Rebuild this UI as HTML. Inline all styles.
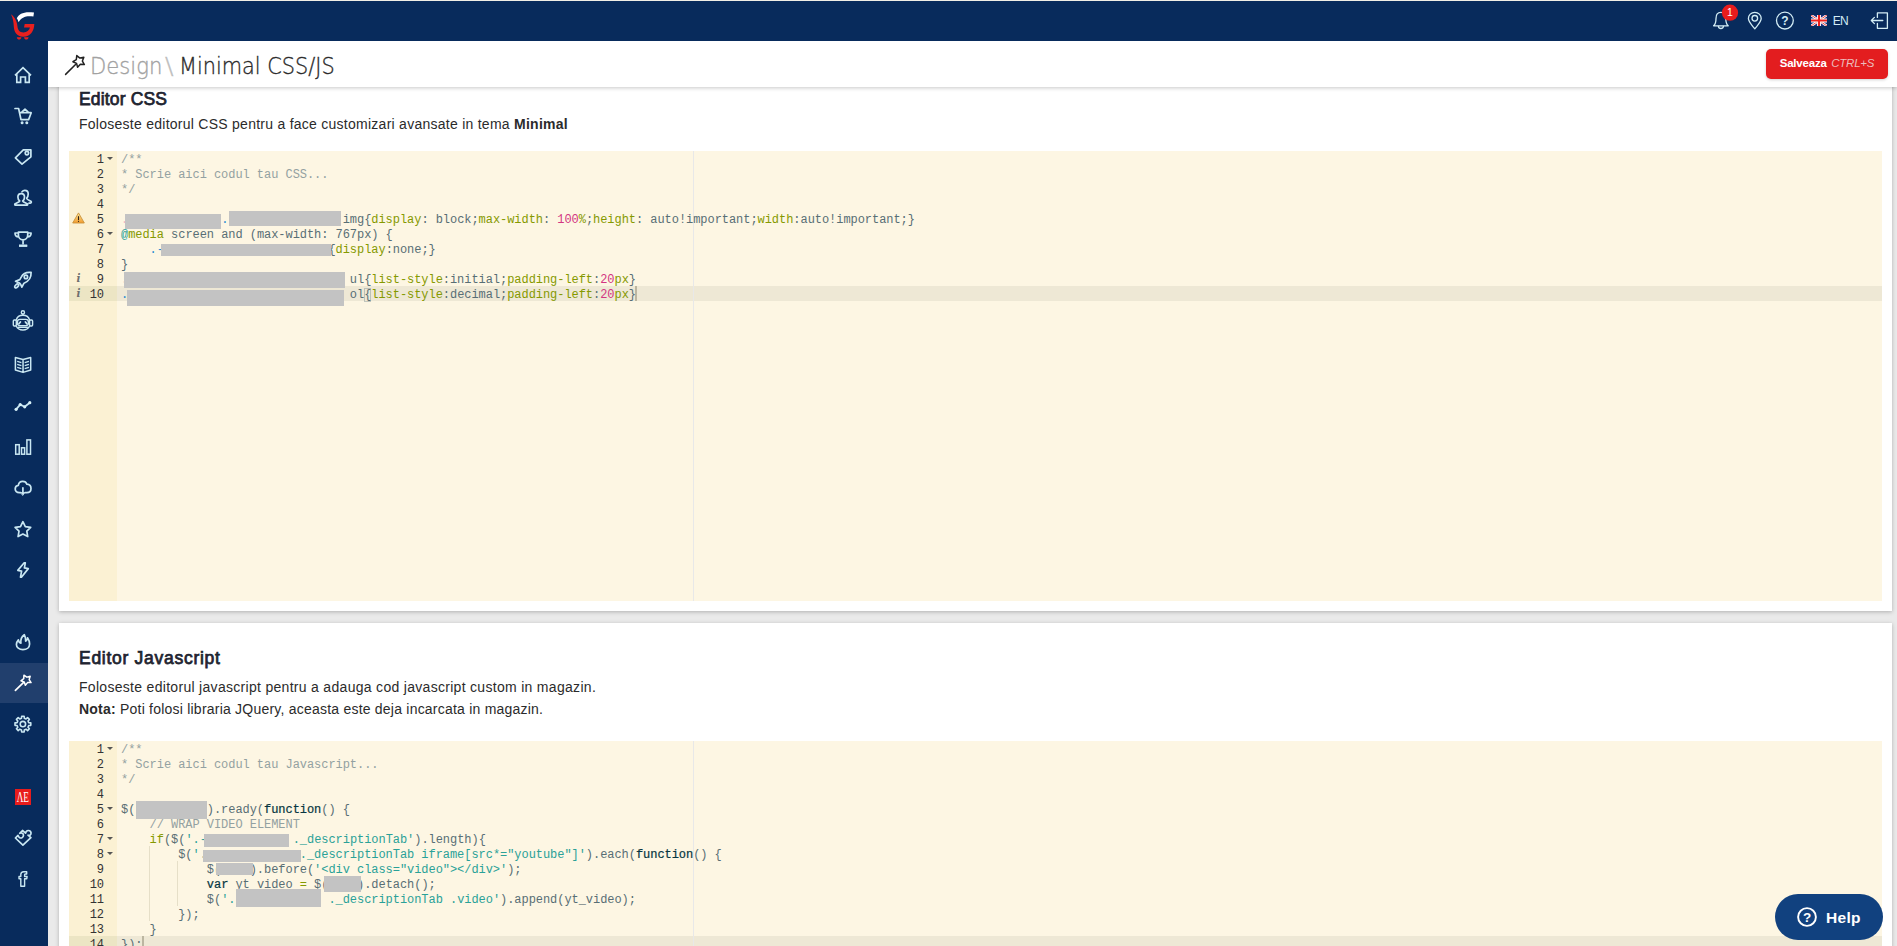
<!DOCTYPE html>
<html lang="ro">
<head>
<meta charset="utf-8">
<title>Design \ Minimal CSS/JS</title>
<style>
*{box-sizing:border-box}
html,body{margin:0;padding:0}
body{width:1897px;height:946px;overflow:hidden;position:relative;background:#eaeaea;font-family:"Liberation Sans",sans-serif;color:#333}
.abs{position:absolute}
#topline{left:0;top:0;width:1897px;height:1px;background:#f1efe6;z-index:30}
#topbar{left:0;top:0;width:1897px;height:41px;background:#082b5c;z-index:20}
#side{left:0;top:0;width:48px;height:946px;background:#082b5c;z-index:21}
#side .act{position:absolute;left:0;top:663px;width:48px;height:40px;background:#213f6d}
#head{left:48px;top:41px;width:1849px;height:46px;background:#fff;box-shadow:0 1px 4px rgba(0,0,0,.22);z-index:10}
#title{left:43.5px;top:12px;font-family:"DejaVu Sans","Liberation Sans",sans-serif;font-weight:200;font-size:23px;letter-spacing:0;line-height:27px;white-space:nowrap;color:#2b2b2b}
#title span{transform-origin:0 50%;-webkit-text-stroke:.35px currentColor}
#title .g{color:#a2a2a2}
#title .sl{color:#bdbdbd}
#save{left:1718px;top:8px;width:122px;height:30px;border-radius:5px;background:#e31d1f;color:#fff;font-size:11.5px;letter-spacing:-0.21px;line-height:29px;text-align:center;white-space:nowrap;box-shadow:0 1px 3px rgba(0,0,0,.18)}
#save b{font-weight:bold;margin-right:1.5px}
#save i{color:#ecbcbd}
.card{left:59px;width:1833px;background:#fff;box-shadow:0 1px 4px rgba(0,0,0,.25)}
#card1{top:70px;height:541px}
#card2{top:623px;height:340px}
h2{position:absolute;margin:0;left:79px;font-size:17.5px;font-weight:normal;-webkit-text-stroke:.75px #1e2430;line-height:20px;color:#1e2430;white-space:nowrap;z-index:3}
p.t{position:absolute;margin:0;left:79px;font-size:14px;line-height:16px;color:#2b2b2b;white-space:nowrap;z-index:3}
.ed{left:69px;width:1813px;background:#fdf6e3;overflow:hidden;font-family:"Liberation Mono",monospace;font-size:12px;line-height:15px;color:#586e75;z-index:3}
.gut{position:absolute;left:0;top:0;width:48px;height:100%;background:#fbf1d3;color:#333}
.gl{position:relative;height:15px;padding-right:13px;text-align:right;letter-spacing:-0.05px;padding-top:2px;line-height:15px}
.gl.ga{background:#ece5c4}
.fold{position:absolute;right:4px;top:6px;width:0;height:0;border-left:3px solid transparent;border-right:3px solid transparent;border-top:3.5px solid #555}
.warn{position:absolute;left:3px;top:0.5px}
.info{position:absolute;left:7.5px;top:0;font-family:"DejaVu Serif","Liberation Serif",serif;font-style:italic;font-weight:bold;font-size:10.5px;color:#6e6e6e;letter-spacing:0}
.code{position:absolute;left:48px;top:0;right:0;height:100%}
.ln{position:relative;z-index:2;height:15px;padding-left:4px;white-space:pre;letter-spacing:-0.05px;padding-top:2px;line-height:15px}
.aline{position:absolute;left:0;right:0;height:15px;background:#eee8d5}
.pm{position:absolute;left:576px;top:0;width:1px;height:100%;background:#e8e8e8}
.cur{z-index:3;position:absolute;width:2px;height:15px;background:rgba(60,55,30,.28)}
.ig{position:absolute;width:1px;background:#e6dfc8}
.c{color:#93a1a1}.k{color:#859900}.n{color:#d33682}.v{color:#268bd2}.s{color:#2aa198}.p{color:#f3b6c4}
.st{color:#073642;-webkit-text-stroke:.22px #073642}
.br{outline:1px solid rgba(147,161,161,.55);outline-offset:-1px}
.rb{position:absolute;background:#c3c3c3;z-index:5}
#help{left:1775px;top:894px;width:108px;height:46px;border-radius:23px;background:#11417f;z-index:40;color:#fff}
#help span{position:absolute;left:51px;top:14px;font-weight:bold;font-size:15.5px;letter-spacing:.3px;line-height:20px}
.ic{position:absolute;fill:none;stroke:#cbe8f3;stroke-width:1.6;stroke-linecap:round;stroke-linejoin:round;overflow:visible}
.tic{position:absolute;fill:none;stroke:#d8eef6;stroke-width:1.5;stroke-linecap:round;stroke-linejoin:round;overflow:visible}
</style>
</head>
<body>
<div id="topbar" class="abs"></div>
<div id="topline" class="abs"></div>
<div id="side" class="abs"><div class="act"></div></div>
<svg class="abs" style="left:0;top:0;z-index:25;pointer-events:none" width="1897" height="946" viewBox="0 0 1897 946">
<g>
<path d="M11 14.2 C15.5 17.5 17 22 17.4 26 C17.8 30 19.5 32.3 23.5 32.4 C27 32.4 29.2 30.4 30 27.5 L24 27.5 L24.7 24 L34.3 24 C34.2 31 30.5 36.7 23.3 36.7 C16.5 36.7 14 31.5 13.8 26.5 C13.6 22 13 18 11 14.2 Z" fill="#e8201f"/>
<path d="M16.8 18.2 C19 13.8 24 11.3 34 12.6 L33.4 16.6 C26.5 15.6 21.5 17 18.6 22.2 C18.2 20.6 17.6 19.4 16.8 18.2 Z" fill="#ffffff"/>
<path d="M16.8 37.2 H21.4 C21.2 38.8 20.2 39.5 19.1 39.5 C18 39.5 17 38.8 16.8 37.2 Z M24 37.2 H28.6 C28.4 38.8 27.4 39.5 26.3 39.5 C25.2 39.5 24.2 38.8 24 37.2 Z" fill="#e8201f"/>
</g>
<g fill="none" stroke="#c9e7f2" stroke-width="1.7" stroke-linecap="round" stroke-linejoin="round">
<path d="M15 75.3 L23 67.6 L31 75.3 M16.8 74.2 V82.4 H20.6 V77 H25.4 V82.4 H29.2 V74.2" stroke-linecap="butt" stroke-linejoin="miter"/>
<path d="M15 108.5 H18.6 L21 119.6 H28.6 L31.2 112.7 H19.6 M22 111.9 L25 109.2 L28 111.9"/>
<circle cx="22.1" cy="122.7" r="1.5" fill="#c9e7f2" stroke="none"/><circle cx="26.8" cy="122.7" r="1.5" fill="#c9e7f2" stroke="none"/>
<path d="M15.4 157.9 L23.3 149.9 H30.9 V156.8 L22 164.2 Z"/><circle cx="26.9" cy="153.1" r="1.7"/>
<path d="M21.2 193.6 C23.4 193.6 24.5 195.2 24.5 197 C24.5 198.8 23.8 200.2 22.7 201 C22.9 202 24.3 202.4 27.3 203.8 C27.8 204.1 27.8 205.2 27 205.2 H15.4 C14.6 205.2 14.6 204.1 15.1 203.8 C18.1 202.4 19.5 202 19.7 201 C18.6 200.2 17.9 198.8 17.9 197 C17.9 195.2 19 193.6 21.2 193.6 Z"/>
<path d="M22 191.8 C22.8 190.8 23.8 190.4 24.8 190.4 C27 190.4 28.2 192 28.2 194 C28.2 196 27.6 197.4 26.6 198.4 C26.9 199.6 29 200.2 30.9 201.2 C31.7 201.8 31.4 203.2 30.4 203.2 H29"/>
<path d="M18.4 232.1 H27.7 V235.3 C27.7 237.8 25.8 239.8 23.05 239.8 C20.3 239.8 18.4 237.8 18.4 235.3 Z M23.05 239.8 V244.6 M19 245.8 H27.2 M18.4 233 H15 C15 235.5 16.2 236.9 18.7 236.9 M27.7 233 H31.1 C31.1 235.5 29.9 236.9 27.4 236.9" stroke-linecap="butt"/>
<path d="M19 245.6 H27.2" stroke-width="2.2" stroke-linecap="butt"/>
<path d="M31.1 272.4 C27 272 23.2 273 21.5 276.6 L19.8 279.6 L15.5 281.3 L19.4 283 C20.5 284 21.5 285.5 21.9 287.2 L24 283.2 C28 281.6 31.4 278.6 31.1 272.4 Z"/><circle cx="25.9" cy="276.9" r="1.7"/>
<ellipse cx="16.7" cy="285.9" rx="2.3" ry="1.3" transform="rotate(-45 16.7 285.9)"/>
<g stroke-width="1.4"><circle cx="22.9" cy="312.4" r="1.6"/><path d="M22.9 314 V315.2"/><path d="M16.2 320 C17 317 19.6 315.2 22.9 315.2 C26.2 315.2 28.8 317 29.6 320 M16.2 326 C17.4 328.6 19.6 330 22.9 330 C26.2 330 28.4 328.6 29.6 326"/><rect x="13.3" y="320" width="3" height="6" rx="1"/><rect x="29.6" y="320" width="3" height="6" rx="1"/><rect x="17.4" y="319.4" width="11" height="6.2" rx="2.6"/><path d="M18.4 327.3 H27.4" /><path d="M19 323.6 L20.4 322 M26.8 323.6 L25.4 322" stroke-width="1.8"/></g>
<g stroke-width="1.5" stroke-linecap="butt"><path d="M15.4 357.6 L23.05 359.6 L30.7 357.6 V370 L23.05 372.4 L15.4 370 Z M23.05 359.6 V372.4"/><path d="M17.2 361.4 L21.4 362.6 M17.2 364.4 L21.4 365.6 M17.2 367.4 L21.4 368.6 M28.9 361.4 L24.7 362.6 M28.9 364.4 L24.7 365.6 M28.9 367.4 L24.7 368.6" stroke-width="1.3"/></g>
<path d="M16.1 409.3 L20.2 404.6 L24.7 406.8 L29.8 402.7" stroke-width="1.8"/>
<circle cx="16.1" cy="409.3" r="1.6" fill="#d6f0f8" stroke="none"/>
<circle cx="20.2" cy="404.6" r="1.6" fill="#d6f0f8" stroke="none"/>
<circle cx="24.7" cy="406.8" r="1.6" fill="#d6f0f8" stroke="none"/>
<circle cx="29.8" cy="402.7" r="1.6" fill="#d6f0f8" stroke="none"/>
<g stroke-width="1.5" stroke-linejoin="miter"><rect x="15.7" y="444.7" width="3.5" height="9.5"/><rect x="21.5" y="447.8" width="3.1" height="6.4"/><rect x="26.9" y="439.9" width="3.6" height="14.3"/></g>
<path d="M20.6 492.6 H19.2 C16.8 492.6 15.2 491 15.2 488.9 C15.2 486.9 16.6 485.5 18.4 485.3 C18.6 482.9 20.4 481.3 22.8 481.3 C24.8 481.3 26.3 482.4 26.9 484.2 C29.4 484.4 31 486.2 31 488.5 C31 490.8 29.3 492.6 26.8 492.6 H25.2 M22.9 487.8 V493"/>
<path d="M20.9 492.6 H24.9 L22.9 495.2 Z" fill="#c9e7f2" stroke-width="0.8"/>
<path d="M22.90 521.70 L25.31 526.58 L30.70 527.37 L26.80 531.17 L27.72 536.53 L22.90 534.00 L18.08 536.53 L19.00 531.17 L15.10 527.37 L20.49 526.58 Z"/>
<path d="M24.2 562.8 L17.8 570.4 L21.6 571.2 L20.5 577.2 L21.4 577.2 L28.3 568.6 L24.4 567.8 L25.3 562.8 Z"/>
<path d="M24.3 634.7 C21.6 636.6 20.4 639.6 20.9 643.2 C19.4 642.6 18.6 641.4 18.4 639.8 C16.8 641.6 16.4 643.2 16.4 644.4 C16.4 647.4 19.2 649.7 22.9 649.7 C26.8 649.7 29.6 647.4 29.6 644 C29.6 641.6 28.6 639.4 27.5 637.8 C27.4 639.6 26.8 640.6 25.7 641.2 C25.6 638.6 25.2 636.4 24.3 634.7 Z"/>
<path d="M21.50 718.27 L21.65 716.20 L24.15 716.20 L24.30 718.27 L26.03 718.98 L27.60 717.63 L29.37 719.40 L28.02 720.97 L28.73 722.70 L30.80 722.85 L30.80 725.35 L28.73 725.50 L28.02 727.23 L29.37 728.80 L27.60 730.57 L26.03 729.22 L24.30 729.93 L24.15 732.00 L21.65 732.00 L21.50 729.93 L19.77 729.22 L18.20 730.57 L16.43 728.80 L17.78 727.23 L17.07 725.50 L15.00 725.35 L15.00 722.85 L17.07 722.70 L17.78 720.97 L16.43 719.40 L18.20 717.63 L19.77 718.98 Z" stroke-width="1.6"/><circle cx="22.9" cy="724.1" r="2.7" stroke-width="1.6"/>
<path d="M15.4 838 L18 835.4 C18.6 837.6 20.6 838.6 22.2 837.6 C23.8 836.6 23.9 834.4 22.4 833.2 C21.4 832.6 20.4 832.7 19.7 833.3 L22.5 830.5 L25.6 833.2 C26 830.8 28 830 29.6 830.8 C31.2 831.6 31.6 833.8 30.2 835 C29.4 835.6 28.6 835.6 28 835.2 L30.9 837.7 L22.9 845.2 Z"/>
<path d="M20.8 886.3 V878.7 H19 V876.5 H20.8 V874.6 C20.8 872.8 22 871.7 23.8 871.7 H26.7 V874 H25.2 C24.7 874 24.6 874.3 24.6 874.8 V876.5 H27.1 L26.8 878.7 H24.6 V886.3 Z" stroke-width="1.4"/>
</g>
<g fill="none" stroke="#ffffff" stroke-width="1.7" stroke-linecap="round" stroke-linejoin="round"><path d="M15.4 690.4 L23.4 682.6"/><path d="M23.93 675.15 L26.80 677.14 L30.18 676.25 L29.17 679.60 L31.07 682.54 L27.57 682.61 L25.36 685.32 L24.21 682.01 L20.95 680.75 L23.74 678.64 Z" stroke-width="1.5"/></g>
<rect x="15" y="789" width="16" height="16" fill="#e81c1c"/>
<text x="16.7" y="801.6" font-family="Liberation Serif, serif" font-size="14.5" fill="#fff" textLength="12.3" lengthAdjust="spacingAndGlyphs">ΛE</text>
<g fill="none" stroke="#222" stroke-width="1.5" stroke-linecap="round" stroke-linejoin="round"><path d="M65.6 74.4 L75.8 64.3"/><path d="M76.78 55.55 L79.90 58.10 L83.85 57.31 L82.39 61.07 L84.36 64.59 L80.34 64.36 L77.60 67.32 L76.57 63.42 L72.92 61.73 L76.30 59.55 Z" stroke-width="1.5"/></g>
<g fill="none" stroke="#d3edf5" stroke-width="1.3" stroke-linecap="round" stroke-linejoin="round">
<path d="M1713.6 25.8 C1715.6 24 1716 22 1716 18.4 C1716 14.6 1718 12.4 1720.9 12.4 C1723.8 12.4 1725.8 14.6 1725.8 18.4 C1725.8 22 1726.2 24 1728.2 25.8 Z"/><path d="M1718.4 26.4 C1718.6 27.8 1719.6 28.5 1720.9 28.5 C1722.2 28.5 1723.2 27.8 1723.4 26.4"/>
<path d="M1754.8 28.8 C1751.4 24.6 1748.4 21.8 1748.4 18.6 C1748.4 15 1751.2 12.4 1754.8 12.4 C1758.4 12.4 1761.2 15 1761.2 18.6 C1761.2 21.8 1758.2 24.6 1754.8 28.8 Z"/><circle cx="1754.8" cy="18.3" r="2.8"/>
<circle cx="1784.9" cy="20.6" r="8.4"/>
<path d="M1877.4 17.4 V12.9 H1887.4 V28.3 H1877.4 V23.4 M1882.8 20.5 H1871.4 M1874.4 17.4 L1871.3 20.5 L1874.4 23.6"/>
</g>
<text x="1784.9" y="25.2" text-anchor="middle" font-family="Liberation Sans, sans-serif" font-weight="bold" font-size="12" fill="#d3edf5">?</text>
<circle cx="1730" cy="12.7" r="8.1" fill="#e81c1c"/>
<text x="1729.9" y="16.4" text-anchor="middle" font-family="Liberation Sans, sans-serif" font-size="10.5" fill="#fff">1</text>
<clipPath id="fc"><rect x="1811" y="15" width="16" height="11"/></clipPath><g clip-path="url(#fc)"><rect x="1811" y="15" width="16" height="11" fill="#1d2f7c"/><path d="M1811 15 L1827 26 M1827 15 L1811 26" stroke="#fff" stroke-width="2.4"/><path d="M1811 15 L1827 26 M1827 15 L1811 26" stroke="#e8302a" stroke-width="0.9"/><path d="M1819 15 V26 M1811 20.5 H1827" stroke="#fff" stroke-width="4"/><path d="M1819 15 V26 M1811 20.5 H1827" stroke="#f0201c" stroke-width="2.2"/></g>
<text x="1832.8" y="24.8" font-family="Liberation Sans, sans-serif" font-size="12" fill="#d3edf5" letter-spacing="-0.75">EN</text>
</svg>

<div id="card1" class="abs card"></div>
<div id="card2" class="abs card"></div>

<div id="head" class="abs">
  <div id="title" class="abs"><span class="g abs" style="left:-1.5px;transform:scaleX(.92)">Design</span> <span class="sl abs" style="left:73px;transform:scaleX(1.1)">\</span> <span class="abs" style="left:87.5px;transform:scaleX(.906)">Minimal CSS/JS</span></div>
  <div id="save" class="abs"><b>Salveaza</b> <i>CTRL+S</i></div>
</div>

<h2 style="top:88.5px;letter-spacing:.15px">Editor CSS</h2>
<p class="t" style="top:116px;letter-spacing:.26px">Foloseste editorul CSS pentru a face customizari avansate in tema <b>Minimal</b></p>

<div class="abs ed" style="top:151px;height:450px">
  <div class="gut">
<div class="gl"><i class="fold"></i>1</div>
<div class="gl">2</div>
<div class="gl">3</div>
<div class="gl">4</div>
<div class="gl"><svg class="warn" viewBox="0 0 13 12" width="13" height="12"><defs><linearGradient id="wg" x1="0" y1="0" x2="0" y2="1"><stop offset="0" stop-color="#fdeaa0"/><stop offset="1" stop-color="#f29a2c"/></linearGradient></defs><path d="M6.5 0.9 L12.3 11 H0.7 Z" fill="url(#wg)" stroke="#c8923a" stroke-width="0.9" stroke-linejoin="round"/><path d="M6.5 4.2 V8.2" stroke="#2a2015" stroke-width="1.1"/><circle cx="6.5" cy="9.5" r="0.6" fill="#2a2015"/></svg>5</div>
<div class="gl"><i class="fold"></i>6</div>
<div class="gl">7</div>
<div class="gl">8</div>
<div class="gl"><span class="info">i</span>9</div>
<div class="gl ga"><span class="info">i</span>10</div>
  </div>
  <div class="code">
    <div class="aline" style="top:135px"></div>
    <div class="pm"></div>
<div class="ln"><span class="c">/**</span></div>
<div class="ln"><span class="c">* Scrie aici codul tau CSS...</span></div>
<div class="ln"><span class="c">*/</span></div>
<div class="ln"></div>
<div class="ln"><span class="p">.</span>             <span class="v">.</span>                img{<span class="k">display</span>: block;<span class="k">max-width</span>: <span class="n">100</span><span class="k">%</span>;<span class="k">height</span>: auto!important;<span class="k">width</span>:auto!important;}</div>
<div class="ln"><span class="s">@</span><span class="k">media</span> screen and (max-width: 767px) {</div>
<div class="ln">    <span class="v">.-</span>                       {<span class="k">display</span>:none;}</div>
<div class="ln">}</div>
<div class="ln"><span class="p">.</span>                               ul{<span class="k">list-style</span>:initial;<span class="k">padding-left</span>:<span class="n">20</span><span class="k">px</span>}</div>
<div class="ln"><span class="v">.</span>                               ol<span class="br">{</span><span class="k">list-style</span>:decimal;<span class="k">padding-left</span>:<span class="n">20</span><span class="k">px</span>}</div>
    <div class="cur" style="left:518px;top:135px"></div>
  </div>
</div>

<h2 style="top:647.5px;letter-spacing:.72px">Editor Javascript</h2>
<p class="t" style="top:679px;letter-spacing:.3px">Foloseste editorul javascript pentru a adauga cod javascript custom in magazin.</p>
<p class="t" style="top:701px;letter-spacing:.22px"><b>Nota:</b> Poti folosi libraria JQuery, aceasta este deja incarcata in magazin.</p>

<div class="abs ed" style="top:741px;height:215px">
  <div class="gut">
<div class="gl"><i class="fold"></i>1</div>
<div class="gl">2</div>
<div class="gl">3</div>
<div class="gl">4</div>
<div class="gl"><i class="fold"></i>5</div>
<div class="gl">6</div>
<div class="gl"><i class="fold"></i>7</div>
<div class="gl"><i class="fold"></i>8</div>
<div class="gl">9</div>
<div class="gl">10</div>
<div class="gl">11</div>
<div class="gl">12</div>
<div class="gl">13</div>
<div class="gl ga">14</div>
  </div>
  <div class="code">
    <div class="aline" style="top:195px"></div>
    <div class="pm"></div>
    <div class="ig" style="left:32px;top:105px;height:75px"></div>
    <div class="ig" style="left:60px;top:120px;height:45px"></div>
<div class="ln"><span class="c">/**</span></div>
<div class="ln"><span class="c">* Scrie aici codul tau Javascript...</span></div>
<div class="ln"><span class="c">*/</span></div>
<div class="ln"></div>
<div class="ln">$(          ).ready(<span class="st">function</span>() {</div>
<div class="ln">    <span class="c">// WRAP VIDEO ELEMENT</span></div>
<div class="ln">    <span class="k">if</span>($(<span class="s">'.-</span>            <span class="s">._descriptionTab'</span>).length){</div>
<div class="ln">        $(<span class="s">'.</span>             <span class="s">._descriptionTab iframe[src*="youtube"]'</span>).each(<span class="st">function</span>() {</div>
<div class="ln">            $(    ).before(<span class="s">'&lt;div class="video"&gt;&lt;/div&gt;'</span>);</div>
<div class="ln">            <span class="st">var</span> yt_video <span class="k">=</span> $(    ).detach();</div>
<div class="ln">            $(<span class="s">'.</span>             <span class="s">._descriptionTab .video'</span>).append(yt_video);</div>
<div class="ln">        });</div>
<div class="ln">    }</div>
<div class="ln">});</div>
    <div class="cur" style="left:25px;top:195px"></div>
  </div>
</div>

<!-- redaction boxes -->
<div class="rb" style="left:124.5px;top:214px;width:96px;height:14.5px"></div>
<div class="rb" style="left:228.5px;top:210.5px;width:112px;height:15px"></div>
<div class="rb" style="left:160.5px;top:243.5px;width:170px;height:12px"></div>
<div class="rb" style="left:124px;top:272px;width:220.5px;height:15.5px"></div>
<div class="rb" style="left:126.5px;top:289.5px;width:217.5px;height:16px"></div>

<div class="rb" style="left:136px;top:801px;width:71px;height:17.5px"></div>
<div class="rb" style="left:204px;top:834px;width:85px;height:13px"></div>
<div class="rb" style="left:203px;top:850px;width:97.5px;height:11.5px"></div>
<div class="rb" style="left:216px;top:863px;width:36.5px;height:12px"></div>
<div class="rb" style="left:324px;top:876px;width:37px;height:15.5px"></div>
<div class="rb" style="left:236px;top:889.3px;width:85px;height:18px"></div>

<div id="help" class="abs">
  <svg class="abs" style="left:22px;top:13px" width="20" height="20" viewBox="0 0 20 20"><circle cx="10" cy="10" r="8.9" fill="none" stroke="#fff" stroke-width="1.9"/><text x="10" y="15" text-anchor="middle" font-family="Liberation Sans, sans-serif" font-weight="bold" font-size="13.5" fill="#fff">?</text></svg>
  <span>Help</span>
</div>
</body>
</html>
